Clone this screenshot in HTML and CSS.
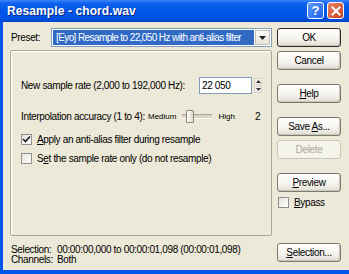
FILE: index.html
```html
<!DOCTYPE html>
<html lang="en">
<head>
<meta charset="UTF-8" />
<title>Resample - chord.wav</title>
<link rel="stylesheet" href="styles.css">
</head>
<body>
  <div class="window">
    <div class="titlebar">
      <span class="title">Resample - chord.wav</span>
      <div class="tb-buttons">
        <span class="tb-btn tb-help">?</span>
        <span class="tb-btn tb-close">
          <svg width="10" height="10" viewBox="0 0 10 10"><path d="M1.5 1.5 L8.5 8.5 M8.5 1.5 L1.5 8.5" stroke="#fff" stroke-width="2" stroke-linecap="square"/></svg>
        </span>
      </div>
    </div>

    <div class="client">
      <div class="main">
        <div class="left">
          <div class="preset-row">
            <span class="label">Preset:</span>
            <div class="combo">
              <span class="combo-text">[Eyo] Resample to 22,050 Hz with anti-alias filter</span>
              <span class="combo-btn">
                <svg width="7" height="4" viewBox="0 0 7 4"><path d="M0 0 H7 L3.5 4 Z" fill="#222"/></svg>
              </span>
            </div>
          </div>

          <div class="group">
            <div class="rate-row">
              <span>New sample rate (2,000 to 192,000 Hz):</span>
              <div class="spin">
                <div class="textbox">22 050</div>
                <div class="spin-btns">
                  <span class="spin-btn"><svg width="5" height="3" viewBox="0 0 5 3"><path d="M0 3 H5 L2.5 0 Z" fill="#333"/></svg></span>
                  <span class="spin-btn"><svg width="5" height="3" viewBox="0 0 5 3"><path d="M0 0 H5 L2.5 3 Z" fill="#333"/></svg></span>
                </div>
              </div>
            </div>

            <div class="interp-row">
              <span class="interp-label">Interpolation accuracy (1 to 4):</span>
              <span class="small">Medium</span>
              <div class="slider">
                <span class="thumb"></span>
              </div>
              <span class="small high">High</span>
              <span class="value">2</span>
            </div>

            <div class="check-row">
              <span class="checkbox checked">
                <svg width="9" height="9" viewBox="0 0 9 9"><path d="M1 4 L3.5 6.5 L8 1.5" fill="none"/></svg>
              </span>
              <span><u>A</u>pply an anti-alias filter during resample</span>
            </div>
            <div class="check-row">
              <span class="checkbox"></span>
              <span>S<u>e</u>t the sample rate only (do not resample)</span>
            </div>
          </div>
        </div>

        <div class="right">
          <button class="btn default">OK</button>
          <button class="btn">Cancel</button>
          <button class="btn gap-top"><u>H</u>elp</button>
          <button class="btn gap-top">Save <u>A</u>s...</button>
          <button class="btn disabled">Delete</button>
          <button class="btn gap-top"><u>P</u>review</button>
          <div class="check-row bypass">
            <span class="checkbox"></span>
            <span><u>B</u>ypass</span>
          </div>
        </div>
      </div>

      <div class="footer">
        <div class="info">
          <div class="info-row"><span class="info-key">Selection:</span><span>00:00:00,000 to 00:00:01,098 (00:00:01,098)</span></div>
          <div class="info-row"><span class="info-key">Channels:</span><span>Both</span></div>
        </div>
        <button class="btn"><u>S</u>election...</button>
      </div>
    </div>
  </div>
</body>
</html>
```

FILE: styles.css
```css
body {
  margin: 0;
  background: #fff;
}
.window {
  width: 349px;
  height: 274px;
  display: flex;
  flex-direction: column;
  background: #0055ea;
  font-family: "Liberation Sans", Arial, sans-serif;
  font-size: 10px;
  letter-spacing: -0.35px;
  color: #000;
  overflow: hidden;
}

/* Title bar */
.titlebar {
  height: 22px;
  flex: none;
  display: flex;
  align-items: center;
  justify-content: space-between;
  padding: 0 5px 0 7px;
  background: linear-gradient(#3a86fa 0%, #0f62ee 15%, #0056e8 50%, #0052e4 85%, #0043c8 100%);
}
.title {
  color: #fff;
  font-weight: bold;
  font-size: 12px;
  letter-spacing: 0.1px;
  text-shadow: 1px 1px 0 #0a2a8a;
}
.tb-buttons {
  display: flex;
  gap: 3px;
  margin-top: -1px;
}
.tb-btn {
  width: 15px;
  height: 15px;
  border: 1px solid #fff;
  border-radius: 3px;
  display: flex;
  align-items: center;
  justify-content: center;
  color: #fff;
  font-weight: bold;
  font-size: 13px;
  letter-spacing: 0;
}
.tb-help {
  background: linear-gradient(135deg, #5c9bff, #1e5fe6);
}
.tb-close {
  background: linear-gradient(135deg, #e9866a, #c8401c);
}

/* Client area */
.client {
  flex: 1;
  margin: 0 0 4px 3px;
  background: #ece9d8;
  display: flex;
  flex-direction: column;
  padding: 6px 8px 0 7px;
}
.main {
  display: flex;
  gap: 5px;
}
.left {
  width: 262px;
  display: flex;
  flex-direction: column;
}
.preset-row {
  display: flex;
  align-items: center;
  height: 19px;
}
.label {
  width: 40px;
  padding-left: 1px;
}
.combo {
  flex: 1;
  height: 19px;
  box-sizing: border-box;
  border: 1px solid #7f9db9;
  background: #fff;
  display: flex;
  align-items: stretch;
  padding: 1px;
}
.combo-text {
  flex: 1;
  background: #316ac5;
  color: #fff;
  padding-left: 3px;
  letter-spacing: -0.6px;
  display: flex;
  align-items: center;
  white-space: nowrap;
  overflow: hidden;
}
.combo-btn {
  width: 15px;
  margin-left: 1px;
  display: flex;
  align-items: center;
  justify-content: center;
  background: linear-gradient(#fdfdfb, #e6e3d6);
  border: 1px solid #c3c1b5;
  box-sizing: border-box;
}

/* Group box */
.group {
  margin-top: 3px;
  height: 186px;
  box-sizing: border-box;
  border: 1px solid #aca899;
  box-shadow: inset 1px 1px 0 #fff;
  border-radius: 2px;
  padding: 26px 0 0 10px;
  display: flex;
  flex-direction: column;
}
.rate-row {
  display: flex;
  align-items: center;
  justify-content: space-between;
  padding-right: 9px;
}
.spin {
  display: flex;
  align-items: center;
  gap: 2px;
}
.textbox {
  width: 53px;
  height: 17px;
  box-sizing: border-box;
  border: 1px solid #7f9db9;
  background: #fff;
  padding-left: 2px;
  display: flex;
  align-items: center;
}
.spin-btns {
  display: flex;
  flex-direction: column;
  gap: 1px;
}
.spin-btn {
  width: 8px;
  height: 7px;
  display: flex;
  align-items: center;
  justify-content: center;
  background: #f4f3ee;
  border: 1px solid #d6d3c6;
  box-sizing: border-box;
}
.interp-row {
  display: flex;
  align-items: center;
  margin-top: 15px;
  height: 14px;
}
.interp-label {
  width: 127px;
}
.small {
  font-size: 8px;
  letter-spacing: 0;
}
.slider {
  width: 26px;
  height: 3px;
  margin-left: 6px;
  background: #d8d5c8;
  border-top: 1px solid #a8a597;
  border-bottom: 1px solid #fff;
  display: flex;
  align-items: center;
  padding-left: 4px;
  box-sizing: content-box;
}
.thumb {
  width: 8px;
  height: 13px;
  box-sizing: border-box;
  background: linear-gradient(90deg, #fff, #dcd9cc);
  border: 1px solid #8d8b7e;
  border-radius: 1px;
}
.high {
  margin-left: 6px;
}
.value {
  margin-left: 20px;
}
.check-row {
  display: flex;
  align-items: center;
  gap: 5px;
  margin-top: 11px;
}
.check-row + .check-row {
  margin-top: 8px;
}
.checkbox {
  width: 11px;
  height: 11px;
  flex: none;
  box-sizing: border-box;
  border: 1px solid #8e8f8f;
  background: linear-gradient(135deg, #e3e2da, #fff);
  display: flex;
  align-items: center;
  justify-content: center;
}
.checkbox.checked svg path {
  stroke: #1a1a1a;
  stroke-width: 1.6;
}

/* Right buttons */
.right {
  width: 64px;
  display: flex;
  flex-direction: column;
  gap: 4px;
}
.btn {
  width: 64px;
  height: 19px;
  font: inherit;
  letter-spacing: inherit;
  color: #000;
  border: 1px solid #7a7a6e;
  border-radius: 3px;
  background: linear-gradient(#fff 0%, #f4f3ee 60%, #dedcd1 100%);
  box-shadow: inset -1px -1px 0 #c9c6b7;
  padding: 0;
}
.btn.default {
  border-color: #2a2a2a;
}
.btn.gap-top {
  margin-top: 10px;
}
.btn.disabled {
  color: #aca899;
  border-color: #c9c7ba;
  background: #f5f4ea;
  box-shadow: none;
}
.right .bypass {
  margin-top: 1px;
  gap: 5px;
  padding-left: 1px;
}

/* Footer */
.footer {
  flex: 1;
  display: flex;
  align-items: center;
  justify-content: space-between;
  padding-bottom: 2px;
}
.info {
  display: flex;
  flex-direction: column;
  padding-left: 1px;
  margin-top: 6px;
}
.info-row {
  height: 10px;
  line-height: 10px;
  display: flex;
}
.info-key {
  width: 46px;
}
```
